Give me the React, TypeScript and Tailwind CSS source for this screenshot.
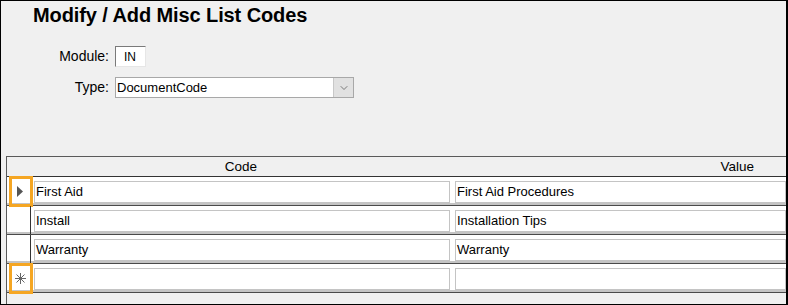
import { ChevronDown } from 'lucide-react'

const rows = [
  { code: 'First Aid', value: 'First Aid Procedures', marker: 'current' },
  { code: 'Install', value: 'Installation Tips', marker: '' },
  { code: 'Warranty', value: 'Warranty', marker: '' },
  { code: '', value: '', marker: 'new' },
]

export default function App() {
  return (
    <div className="w-[788px] h-[305px] bg-[#f0f0f0] border-t border-l border-b border-r-2 border-black overflow-hidden flex flex-col font-['Liberation_Sans',Arial,sans-serif] text-[13px] text-black">
      {/* Titulo */}
      <h1 className="pl-[32px] pt-[3px] text-[20px] font-bold leading-[22px] tracking-[-0.1px]">Modify / Add Misc List Codes</h1>

      {/* Filtros */}
      <div className="grid grid-cols-[108px_auto] gap-x-[6px] items-center mt-[20px] w-fit text-[14px]">
        <label className="text-right">Module:</label>
        <div className="w-[31px] h-[21px] bg-white border border-t-[#7a7a7a] border-l-[#7a7a7a] border-b-[#e6e6e6] border-r-[#e6e6e6] flex items-center pl-[8px] text-[12px]">
          IN
        </div>
        <label className="text-right mt-[10px]">Type:</label>
        <div className="mt-[10px] w-[239px] h-[21px] bg-white border border-[#a8a8a8] flex items-center text-[13px]">
          <span className="flex-1 pl-[1px]">DocumentCode</span>
          <div className="w-[20px] h-full bg-[#e1e1e1] border-l border-[#c8c8c8] flex items-center justify-center">
            <ChevronDown size={12} strokeWidth={1.5} className="text-[#555]" />
          </div>
        </div>
      </div>

      {/* Tabla */}
      <div className="mt-[58px] ml-[5px] flex-1 border-l border-t border-[#5a5a5a] bg-[#f0f0f0]">
        <div className="h-[20px] flex border-b border-[#333] pl-[24px] text-[13.5px]">
          <div className="w-[420px] text-center leading-[19px]">Code</div>
          <div className="flex-1 text-right pr-[32px] leading-[19px]">Value</div>
        </div>
        {rows.map((r, i) => (
          <div key={i} className="h-[29px] flex bg-white border-b border-[#4a4a4a] shadow-[inset_0_-2px_0_#c4c4c4]">
            <div className="w-[24px] relative border-r border-[#333] flex items-center justify-center">
              {r.marker === 'current' && (
                <svg width="6" height="11" viewBox="0 0 6 11" className="ml-[3px]">
                  <path d="M0 0 L6 5.5 L0 11 Z" fill="#555" />
                </svg>
              )}
              {r.marker === 'new' && (
                <svg width="11" height="11" viewBox="0 0 11 11" className="ml-[3px]">
                  <g stroke="#666" strokeWidth="1">
                    <line x1="5.5" y1="0" x2="5.5" y2="11" />
                    <line x1="0" y1="5.5" x2="11" y2="5.5" />
                    <line x1="1.5" y1="1.5" x2="9.5" y2="9.5" />
                    <line x1="9.5" y1="1.5" x2="1.5" y2="9.5" />
                  </g>
                </svg>
              )}
              {r.marker && (
                <div className="absolute -top-[1px] left-[2px] w-[24px] h-[31px] border-[3px] border-[#f5a623]" />
              )}
            </div>
            <div className="flex items-start pt-[4px] gap-[5px] flex-1 pl-[3px]">
              <div className="w-[416px] h-[22px] bg-white border border-[#c4c4c4] leading-[20px] pl-[1px]">{r.code}</div>
              <div className="flex-1 h-[22px] bg-white border border-[#c4c4c4] leading-[20px] pl-[1px]">{r.value}</div>
            </div>
          </div>
        ))}
      </div>
    </div>
  )
}
